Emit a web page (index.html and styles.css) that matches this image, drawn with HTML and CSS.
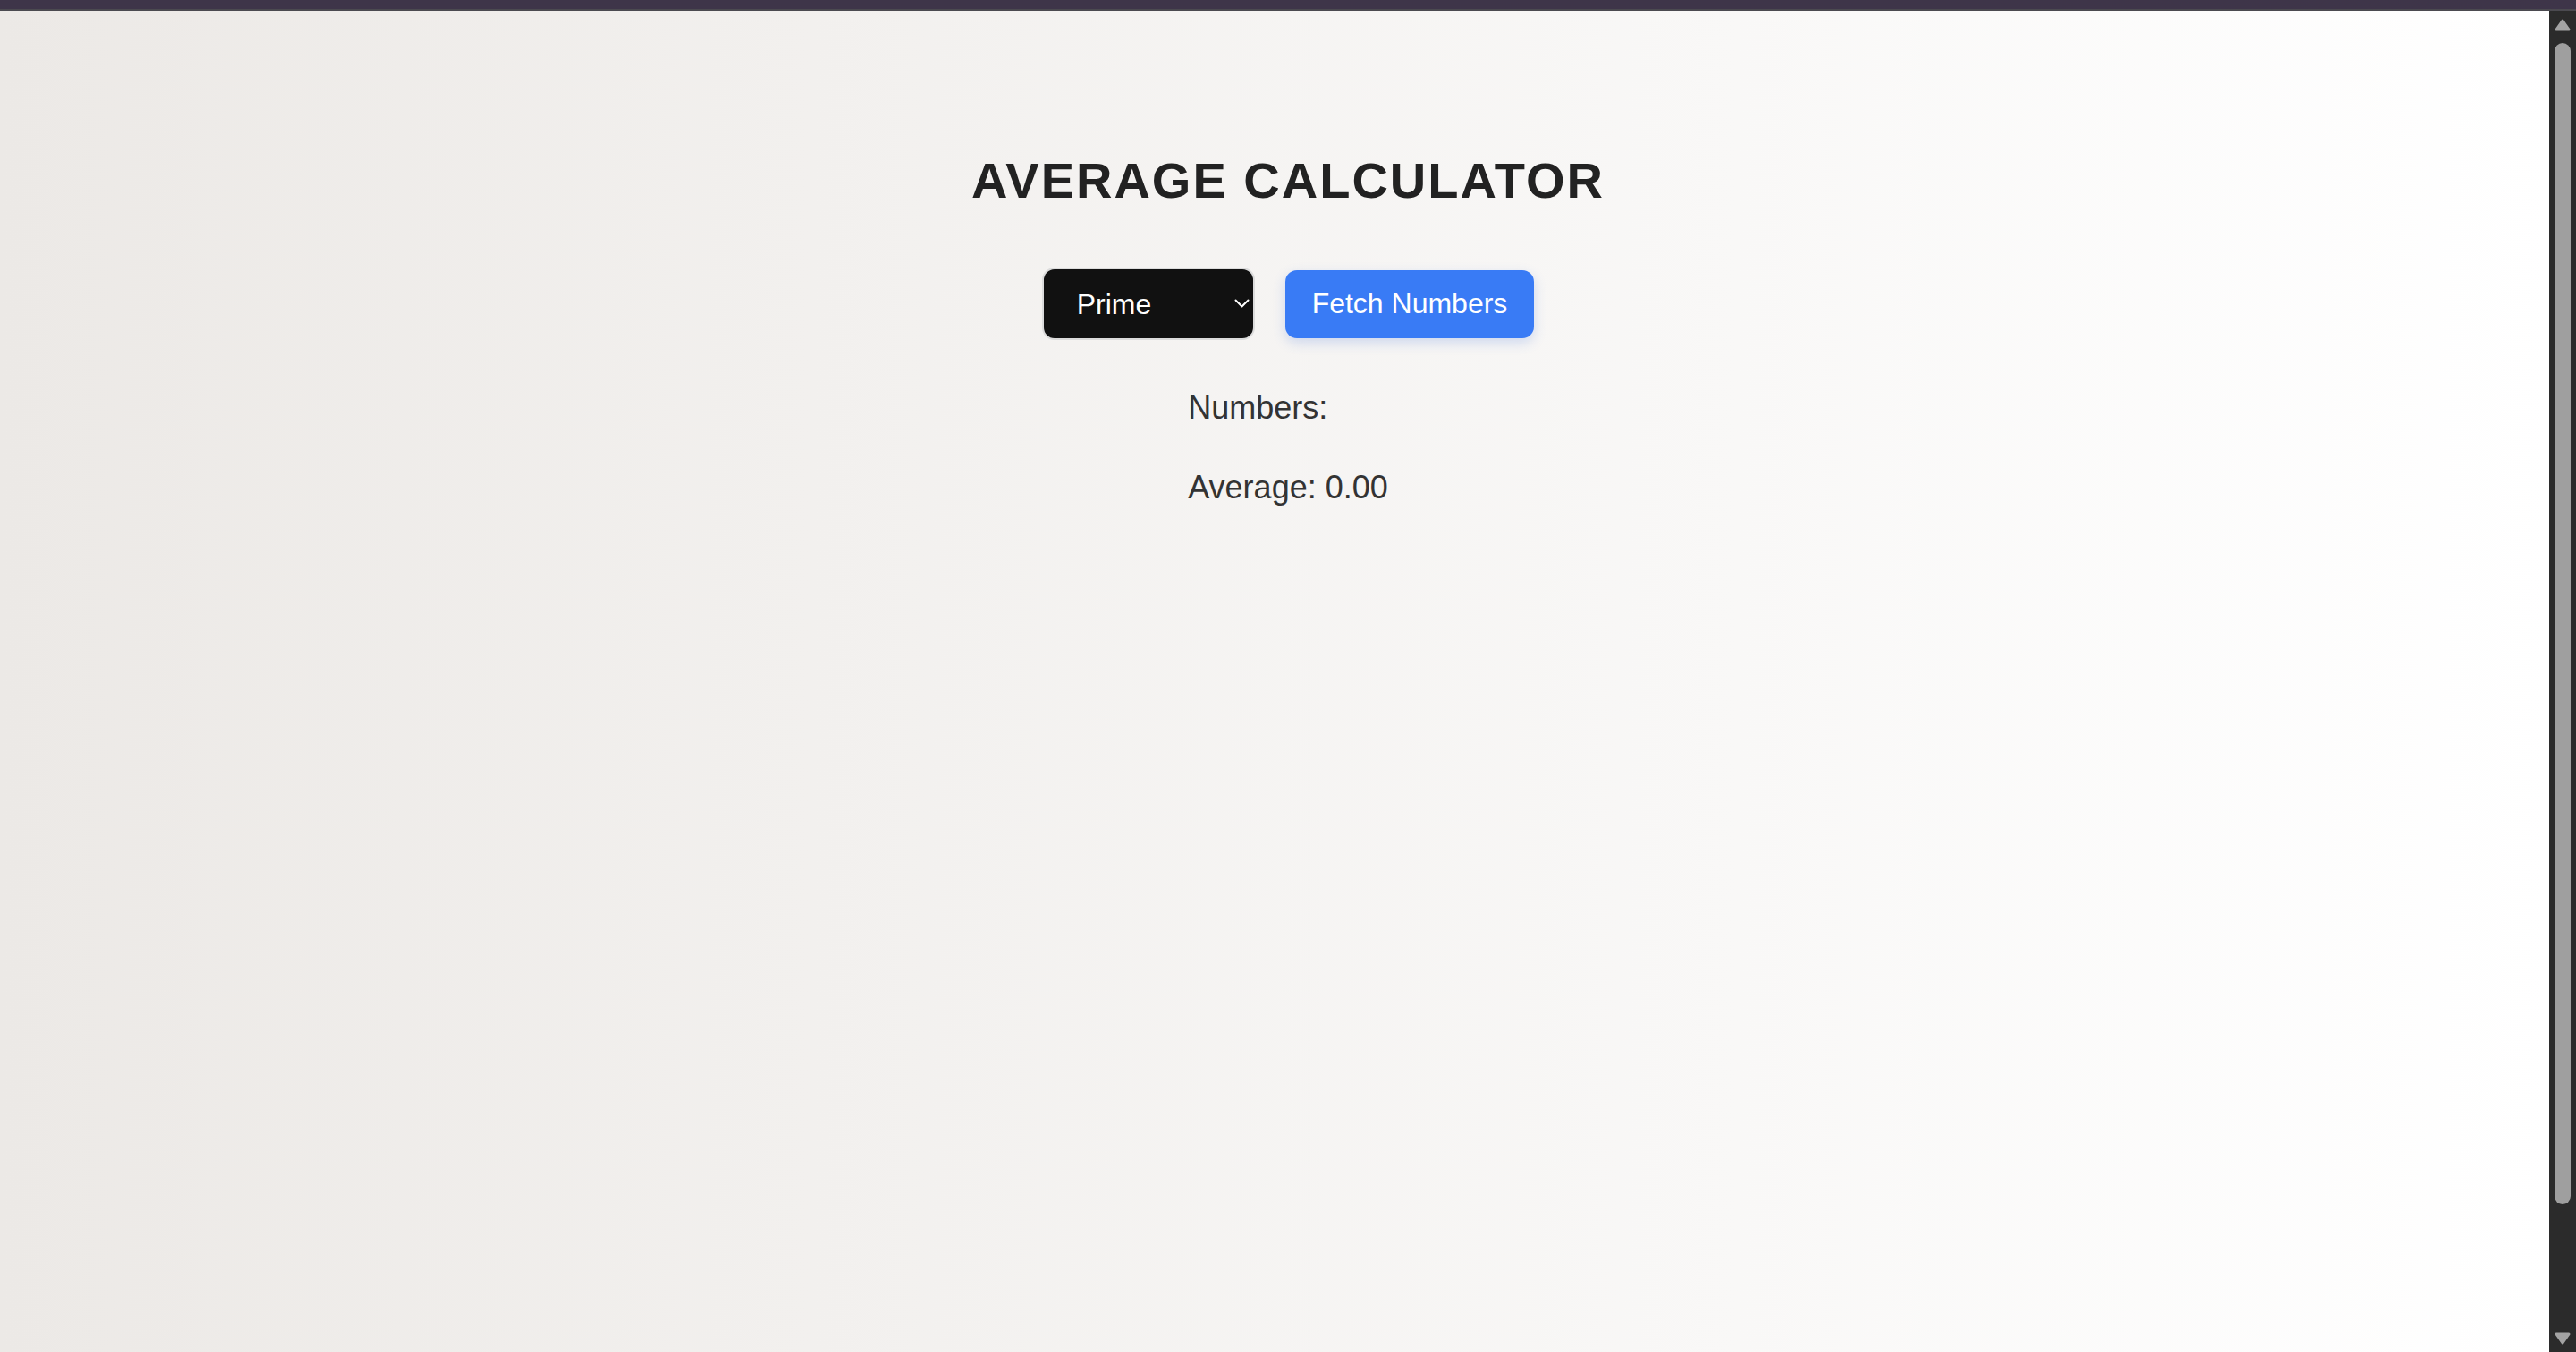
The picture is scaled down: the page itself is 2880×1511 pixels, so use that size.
FILE: index.html
```html
<!DOCTYPE html>
<html lang="en">
<head>
<meta charset="utf-8">
<title>Average Calculator</title>
<link rel="stylesheet" href="styles.css">
</head>
<body>
<div class="window">
  <div class="chrome-bar"></div>
  <div class="viewport">
    <main class="page">
      <h1 class="title">AVERAGE CALCULATOR</h1>
      <div class="controls">
        <div class="select-wrap">
          <select class="type-select">
            <option>Prime</option>
            <option>Fibonacci</option>
            <option>Even</option>
            <option>Random</option>
          </select>
          <svg class="chevron" width="17" height="10" viewBox="0 0 17 10" aria-hidden="true">
            <polyline points="1.5,1.5 8.5,8.5 15.5,1.5" fill="none" stroke="#ffffff" stroke-width="2" stroke-linecap="round" stroke-linejoin="round"/>
          </svg>
        </div>
        <button class="fetch-btn" type="button">Fetch Numbers</button>
      </div>
      <div class="results">
        <p class="result-line">Numbers:</p>
        <p class="result-line">Average: 0.00</p>
      </div>
    </main>
    <div class="scrollbar" aria-hidden="true">
      <svg class="sb-arrow sb-up" width="18" height="14" viewBox="0 0 18 14">
        <polygon points="9,2 16,12 2,12" fill="#a3a3a3" stroke="#a3a3a3" stroke-width="3" stroke-linejoin="round"/>
      </svg>
      <div class="sb-track"><div class="sb-thumb"></div></div>
      <svg class="sb-arrow sb-down" width="18" height="14" viewBox="0 0 18 14">
        <polygon points="2,2 16,2 9,12" fill="#a3a3a3" stroke="#a3a3a3" stroke-width="3" stroke-linejoin="round"/>
      </svg>
    </div>
  </div>
</div>
</body>
</html>
```

FILE: styles.css
```css
* {
  box-sizing: border-box;
}

html, body {
  margin: 0;
  padding: 0;
  height: 100%;
  overflow: hidden;
}

body {
  font-family: "Liberation Sans", Arial, sans-serif;
}

.window {
  display: flex;
  flex-direction: column;
  height: 1511px;
}

.chrome-bar {
  height: 12px;
  flex: none;
  background: #3e3549;
  border-bottom: 2px solid #4b4a50;
}

.viewport {
  flex: 1;
  display: flex;
  min-height: 0;
}

.page {
  flex: 1;
  display: flex;
  flex-direction: column;
  align-items: center;
  padding: 158px 0 0 30px;
  background: linear-gradient(to right, #ece9e6, #ffffff);
}

.title {
  margin: 0;
  font-size: 56px;
  line-height: 64px;
  font-weight: 700;
  letter-spacing: 2px;
  color: #222222;
}

.controls {
  margin-top: 65px;
  display: flex;
  align-items: center;
  gap: 34px;
}

.select-wrap {
  position: relative;
  width: 238px;
  height: 81px;
}

.type-select {
  appearance: none;
  -webkit-appearance: none;
  width: 100%;
  height: 100%;
  margin: 0;
  padding: 0 30px 0 37px;
  border: 2px solid #dcdcdc;
  border-radius: 14px;
  background: #111111;
  color: #ffffff;
  font-family: "Liberation Sans", Arial, sans-serif;
  font-size: 32px;
  outline: none;
}

.chevron {
  position: absolute;
  right: 6px;
  top: 35px;
  pointer-events: none;
}

.fetch-btn {
  height: 76px;
  padding: 0 30px;
  border: none;
  border-radius: 13px;
  background: #397bf5;
  color: #ffffff;
  font-family: "Liberation Sans", Arial, sans-serif;
  font-size: 32px;
  box-shadow: 0 5px 14px rgba(57, 110, 220, 0.22);
}

.results {
  margin-top: 50px;
  text-align: left;
}

.result-line {
  margin: 0 0 37px;
  font-size: 36px;
  line-height: 52px;
  color: #333333;
}

.scrollbar {
  width: 30px;
  flex: none;
  display: flex;
  flex-direction: column;
  align-items: center;
  background: #2b2b2b;
}

.sb-up {
  margin-top: 9px;
  flex: none;
}

.sb-track {
  flex: 1;
  margin-top: 13px;
  width: 18px;
}

.sb-thumb {
  width: 18px;
  height: 1298px;
  border-radius: 9px;
  background: #9f9f9f;
}

.sb-down {
  margin-bottom: 8px;
  flex: none;
}
```
